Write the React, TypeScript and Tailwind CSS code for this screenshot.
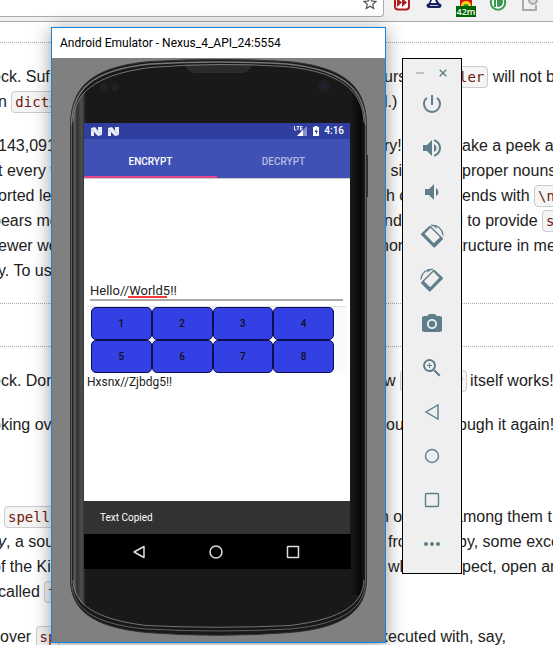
import type { ReactNode } from "react";
import { MdMoreHoriz, MdPhotoCamera, MdPowerSettingsNew, MdStarBorder, MdVolumeDown, MdVolumeUp, MdZoomIn } from "react-icons/md";

function Code({ children, className = "px-[3px]" }: { children: ReactNode; className?: string }) {
  return (
    <code
      className={`rounded border border-[#ccc] bg-[#f5f5f5] py-[2px] font-['DejaVu_Sans_Mono',monospace] text-sm leading-4 text-[#6f1a0c] ${className}`}
    >
      {children}
    </code>
  );
}

function Line({ left, mid, right }: { left?: ReactNode; mid?: ReactNode; right?: ReactNode }) {
  return (
    <div className="grid h-[25px] grid-cols-[380px_74px_1fr] whitespace-nowrap leading-[25px]">
      <div>{left}</div>
      <div>{mid}</div>
      <div>{right}</div>
    </div>
  );
}

function Article() {
  return (
    <main className="pt-5 font-['Liberation_Sans',Arial,sans-serif] text-base text-[#222]">
      <hr className="border-t border-dotted border-[#aaa]" />
      <div className="mt-[21px]">
        <Line
          left={<p className="-ml-2">eck. Suf</p>}
          mid={<p className="pl-1">urs</p>}
          right={<p className="pl-1"><Code className="pr-[3px]">ler</Code> will not b</p>}
        />
        <Line left={<p className="-ml-0.5">n <Code>dicti</Code></p>} mid={<p className="pl-1">l.)</p>} />
      </div>
      <div className="mt-[19px]">
        <Line left={<p className="-ml-0.5">143,091</p>} mid={<p className="pl-1">ry!</p>} right={<p className="pl-2">ake a peek a</p>} />
        <Line left={<p className="-ml-0.5">t every w</p>} mid={<p className="pl-1.5">&nbsp;si</p>} right={<p className="pl-2">proper nouns</p>} />
        <Line left={<p className="-ml-0.5">orted lex</p>} mid={<p className="pl-1.5">h c</p>} right={<p className="pl-2">ends with <Code>\n</Code></p>} />
        <Line left={<p className="-ml-2">pears mo</p>} mid={<p className="pl-1">nd</p>} right={<p>d to provide <Code>s</Code></p>} />
        <Line left={<p className="-ml-0.5">ewer wo</p>} mid={<p>hor</p>} right={<p className="pl-1">tructure in mer</p>} />
        <Line left={<p className="-ml-0.5">y. To us</p>} />
      </div>
      <hr className="mt-5 border-t border-dotted border-[#aaa]" />
      <hr className="mt-[42px] border-t border-dotted border-[#aaa]" />
      <div className="mt-[21px]">
        <Line left={<p className="-ml-2">eck. Don</p>} mid={<p className="pl-1">w <Code>speller</Code></p>} right={<p className="pl-4">itself works!</p>} />
      </div>
      <div className="mt-[19px]">
        <Line left={<p className="-ml-2">oking ov</p>} mid={<p className="pl-1.5">ou</p>} right={<p className="pl-1">ough it again!</p>} />
      </div>
      <div className="mt-[67px]">
        <Line left={<p className="pl-1"><Code>spelle</Code></p>} mid={<p>n o</p>} right={<p>among them t</p>} />
        <Line left={<p className="-ml-0.5"><em>y</em>, a sou</p>} mid={<p className="pl-2">fro</p>} right={<p className="pl-1">by, some exce</p>} />
        <Line left={<p className="-ml-2">of the Kin</p>} mid={<p className="pl-2">wh</p>} right={<p className="pl-2">pect, open ar</p>} />
        <Line left={<p className="-ml-0.5">called <Code>t</Code></p>} />
      </div>
      <div className="mt-5">
        <Line left={<p>over <Code>sp</Code></p>} mid={<p>xecuted with, say,</p>} />
      </div>
    </main>
  );
}

const extensionButton = "relative flex w-8 shrink-0 justify-center";

function BrowserBar() {
  return (
    <header className="flex h-[22px] items-start overflow-hidden border-b border-[#a9a9a9] bg-[#f1f1f1]">
      <div className="flex h-[17px] w-[384px] shrink-0 items-end justify-end rounded-br border-b border-r border-[#aaa] bg-white pr-1">
        <button aria-label="Bookmark this page" className="mb-1 flex text-[#555]">
          <MdStarBorder size={18} />
        </button>
      </div>
      <button aria-label="Fast forward" className={`${extensionButton} ml-[2px]`}>
        <svg width="18" height="12" viewBox="0 0 18 12">
          <rect x="2" y="-6" width="14" height="15.500" rx="3" fill="#fff" stroke="#b01c22" strokeWidth="2" />
          <path d="M4 -2 9 2.500 4 7zM9 -2 14 2.500 9 7z" fill="#b01c22" />
        </svg>
      </button>
      <button aria-label="Cloud" className={extensionButton}>
        <svg width="18" height="12" viewBox="0 0 18 12">
          <path d="M4 3 6 -2h5l3 5Q17 4 16.500 6 16 8 14 8H4Q2 8 1.500 6 1 4 4 3z" fill="#18215f" />
          <path d="M7 0h3l1.500 3h-6zM5 5.300h8v.8H5z" fill="#fff" />
        </svg>
      </button>
      <button aria-label="Timer, 42m" className={extensionButton}>
        <svg width="14" height="12" viewBox="0 0 14 12">
          <path d="M1 -3h12v10H1z" fill="#d91414" />
          <path d="M2 5Q3 1 7 1t5 4v2H2z" fill="#ffd21c" />
          <path d="M4 7Q4 4 7 4t3 3z" fill="#269b24" />
        </svg>
        <span className="absolute left-1.5 top-1.5 h-[11px] w-5 bg-[#006400] text-center font-['Open_Sans',sans-serif] text-[9px] font-semibold leading-[11px] text-white">42m</span>
      </button>
      <button aria-label="Pushbullet" className={extensionButton}>
        <svg width="18" height="12" viewBox="0 0 18 12">
          <circle cx="9" cy="2.500" r="7.200" fill="#fff" stroke="#3a9b50" strokeWidth="2" />
          <path d="M5 -3h2v10H5zM8 -3Q14 -3 14 2T8 7z" fill="#3a9b50" />
        </svg>
      </button>
      <button aria-label="Extension" className={extensionButton}>
        <svg width="18" height="12" viewBox="0 0 18 12">
          <path d="M2 -2v12h13V5" fill="none" stroke="#aaa" strokeWidth="2" />
          <circle cx="12" cy="0" r="4" fill="#ddd" stroke="#aaa" strokeWidth="2" />
        </svg>
      </button>
    </header>
  );
}

function PhoneFrame() {
  return (
    <svg className="absolute left-0 top-0" width="333" height="584" viewBox="52 58 333 584" aria-hidden="true">
      <defs>
        <linearGradient id="side" x1="72" x2="86" y1="0" y2="0" gradientUnits="userSpaceOnUse">
          <stop offset="0" stopColor="#222" />
          <stop offset="0.200" stopColor="#606060" />
          <stop offset="0.350" stopColor="#303030" />
          <stop offset="0.700" stopColor="#505050" />
          <stop offset="1" stopColor="#171717" />
        </linearGradient>
        <linearGradient id="rightSide" x1="352" x2="367" y1="0" y2="0" gradientUnits="userSpaceOnUse">
          <stop offset="0" stopColor="#161616" />
          <stop offset="0.600" stopColor="#080808" />
          <stop offset="1" stopColor="#202020" />
        </linearGradient>
        <clipPath id="face">
          <path d="M72.500 125C73 93 92 74 150 67Q218 61 285 66C345 72 363.500 93 364 125V580C363.500 605 343 620 290 626Q218 631 146 626C94 620 73 605 72.500 580Z" />
        </clipPath>
      </defs>
      <path d="M366 155h2v42h-2z" fill="#333" />
      <path d="M70.500 125C71 88 90 67 150 61.500Q218 57.500 287 61.500C347 67 366 88 366.500 125V580C366 610 345 628 290 632.500Q218 638 146 632.500C92 627 71 610 70.500 580Z" fill="#191919" stroke="#303030" />
      <path d="M71.500 125C72 90 91 70 150 64Q218 60 287 64C346 70 365 91 365.500 125" fill="none" stroke="#777" strokeWidth="1.500" />
      <path d="M365.500 125V580C365 608 344 624 290 629Q218 633 146 629C92 624 72 608 71.500 580V125" fill="none" stroke="#606060" />
      <g clipPath="url(#face)">
        <path d="M72 60h294v572H72z" fill="#191919" />
        <path d="M72 125Q74 98 86 86V612Q74 602 72 580z" fill="url(#side)" />
        <path d="M352 90h15v505h-15z" fill="url(#rightSide)" />
        <path d="M183 64h70l-5 7-5 2h-49l-5-2z" fill="#2b2b2b" />
      </g>
      <path d="M73 122C74 94 93 75 150 67.500Q218 62 285 66.500C344 72 362.500 93 364 122" fill="none" stroke="#8c8c8c" strokeWidth="0.800" />
      <path d="M364 580C363 604 343 619 290 625.500Q218 629 146 625.500C94 619 74 604 73 580" fill="none" stroke="#8c8c8c" strokeWidth="0.800" />
      <circle cx="324" cy="86" r="6" fill="#212121" />
      <circle cx="324" cy="86" r="2" fill="#22223c" />
      <circle cx="104" cy="87" r="4" fill="#212121" />
      <circle cx="115" cy="87" r="4" fill="#212121" />
    </svg>
  );
}

function NotificationIcon() {
  return (
    <svg width="11" height="9" viewBox="0 0 11 9" aria-hidden="true">
      <path d="M0 1 4 0 7 4V0h4v8L7 9 3 5v4H0z" fill="#fff" opacity="0.900" />
      <path d="M3 5 0 2M7 4l4 4" stroke="#9aa3df" strokeWidth="0.600" />
    </svg>
  );
}

const cipherKeys = ["1", "2", "3", "4", "5", "6", "7", "8"];
const tab = "flex-1 pt-2 text-center text-[10px] font-medium";
const navButton = "flex size-6 items-center justify-center";

function PhoneScreen() {
  return (
    <div className="relative ml-8 mr-[35px] bg-white font-['Roboto',sans-serif] text-black">
      <div className="flex h-4 items-center bg-[#303f9f] pl-[7px] pr-1.5 text-white">
        <NotificationIcon />
        <span className="w-1.5" />
        <NotificationIcon />
        <span className="flex-1" />
        <svg width="27" height="12" viewBox="0 0 27 12" aria-label="LTE signal and charging battery">
          <path d="M14 1v10H4z" fill="#8790cb" />
          <path d="M10 5v6H4z" fill="#fff" />
          <path d="M1.500 1v4h2M3.500 1.500h3M5 1.500V5M9.500 1.500h-2V5h2M7.500 3.200h2" fill="none" stroke="#fff" strokeWidth="0.900" />
          <path d="M20 2h1.500V1h3v1H26v9h-6z" fill="#fff" />
          <path d="M23.500 3.500 21.500 7h1.500v2.500l2-3.500h-1.500z" fill="#303f9f" />
        </svg>
        <time className="pl-1 text-[10px] font-medium leading-4">4:16</time>
      </div>
      <div role="tablist" className="flex h-[39px] bg-[#3f51b5]">
        <button role="tab" aria-selected="true" className={`${tab} border-b-2 border-[#e0458e] text-white`}>ENCRYPT</button>
        <button role="tab" aria-selected="false" className={`${tab} border-b-2 border-transparent text-[#b6bde3]`}>DECRYPT</button>
      </div>
      <div className="h-[323px] border-t border-[#ccc] pl-[3px] pr-1">
        <div className="px-[3px] pt-[102px]">
          <div className="relative border-b-2 border-[#aaa]">
            <input aria-label="Message" defaultValue="Hello//World5!!" spellCheck={false} className="block h-[18px] w-full bg-transparent pt-[2px] text-[13px] text-[#222] outline-none" />
            <span className="absolute bottom-px left-[38px] h-[2px] w-[39px] bg-[#f03c3c]" />
          </div>
        </div>
        <div className="mt-[5px] border-t border-[#e4e4e4] bg-[#fafafa]">
          <div className="ml-1 mr-3 grid grid-cols-4">
            {cipherKeys.map((key) => (
              <button key={key} className="h-[33px] rounded-[5px] border border-[#0c1050] bg-[#3340e4] text-[10px] font-medium text-[#111]">
                {key}
              </button>
            ))}
          </div>
        </div>
        <output className="block text-[12px] leading-[19px] text-[#222]">Hxsnx//Zjbdg5!!</output>
      </div>
      <div role="status" className="h-[33px] bg-[#323232] pl-4 text-[10px] leading-[34px] text-white">Text Copied</div>
      <nav className="-mr-px flex h-[35px] items-center justify-center gap-[53px] bg-black pr-[3px] text-[#ddd]">
        <button aria-label="Back" className={navButton}>
          <svg width="14" height="14" viewBox="0 0 14 14" fill="none" stroke="currentColor" strokeWidth="1.500"><path d="M12 1.500v11L2 7z" strokeLinejoin="round" /></svg>
        </button>
        <button aria-label="Home" className={navButton}>
          <svg width="14" height="14" viewBox="0 0 14 14" fill="none" stroke="currentColor" strokeWidth="1.500"><circle cx="7" cy="7" r="6" /></svg>
        </button>
        <button aria-label="Overview" className={navButton}>
          <svg width="14" height="14" viewBox="0 0 14 14" fill="none" stroke="currentColor" strokeWidth="1.500"><rect x="1.500" y="1.500" width="11" height="11" rx="0.500" /></svg>
        </button>
      </nav>
    </div>
  );
}

function RotateIcon({ className = "" }: { className?: string }) {
  return (
    <svg className={className} width="24" height="24" viewBox="0 0 24 24" fill="currentColor" aria-hidden="true">
      <path fillRule="evenodd" d="M9.300 2Q10 1.400 10.700 2L22.700 14Q23.400 14.800 22.700 15.500L15 23.300Q14.300 24 13.500 23.300L1.300 11Q.6 10.300 1.300 9.600ZM10.500 3.800 4.700 9.700 13.800 19.300 20 13.200Z" />
      <path d="M11 1.200Q21.500 1 23.200 11.500" fill="none" stroke="currentColor" strokeWidth="1.200" />
      <path d="M11.500 1h4l2 4z" />
    </svg>
  );
}

const outline = { width: 16, height: 16, viewBox: "0 0 16 16", fill: "none", stroke: "currentColor", strokeWidth: 1.4 };

const tools: { label: string; icon: ReactNode }[] = [
  { label: "Power", icon: <MdPowerSettingsNew size={24} /> },
  { label: "Volume up", icon: <MdVolumeUp size={24} /> },
  { label: "Volume down", icon: <MdVolumeDown size={24} /> },
  { label: "Rotate left", icon: <RotateIcon /> },
  { label: "Rotate right", icon: <RotateIcon className="-scale-x-100" /> },
  { label: "Take screenshot", icon: <MdPhotoCamera size={24} /> },
  { label: "Zoom", icon: <MdZoomIn size={24} /> },
  { label: "Back", icon: <svg {...outline}><path d="M14 1v14L2 8z" /></svg> },
  { label: "Home", icon: <svg {...outline}><circle cx="8" cy="8" r="6.500" /></svg> },
  { label: "Overview", icon: <svg {...outline}><rect x="1.500" y="1.500" width="13" height="13" rx="1" /></svg> },
  { label: "More", icon: <MdMoreHoriz size={24} /> },
];

function EmulatorTools() {
  return (
    <aside className="absolute left-[402px] top-[58px] h-[516px] w-[60px] border border-black bg-[#efefef] text-[#607d8b]">
      <div className="flex h-[23px] items-center justify-center gap-3 pt-1">
        <button aria-label="Minimize" className="flex size-[10px] items-center">
          <svg width="8" height="2" viewBox="0 0 8 2"><path d="M0 1h8" stroke="#a5b5bd" strokeWidth="1.500" /></svg>
        </button>
        <button aria-label="Close" className="flex size-[10px] items-center justify-center">
          <svg width="8" height="8" viewBox="0 0 8 8"><path d="M.7.7 7.300 7.300M7.300.7.700 7.300" stroke="currentColor" strokeWidth="1.400" /></svg>
        </button>
      </div>
      {tools.map((tool) => (
        <button key={tool.label} aria-label={tool.label} className="flex h-11 w-full items-center justify-center">
          {tool.icon}
        </button>
      ))}
    </aside>
  );
}

export default function App() {
  return (
    <div className="relative h-screen overflow-hidden bg-white">
      <BrowserBar />
      <Article />
      <section className="absolute left-[51px] top-[27px] w-[335px] border border-[#1883d7] bg-[#808080] shadow-[0_3px_18px_rgba(0,0,0,0.4)]">
        <h1 className="h-[30px] bg-white pl-2 font-['Roboto',sans-serif] text-xs leading-[30px] text-black">Android Emulator - Nexus_4_API_24:5554</h1>
        <div className="relative h-[584px] pt-[65px]">
          <PhoneFrame />
          <PhoneScreen />
        </div>
      </section>
      <EmulatorTools />
    </div>
  );
}
